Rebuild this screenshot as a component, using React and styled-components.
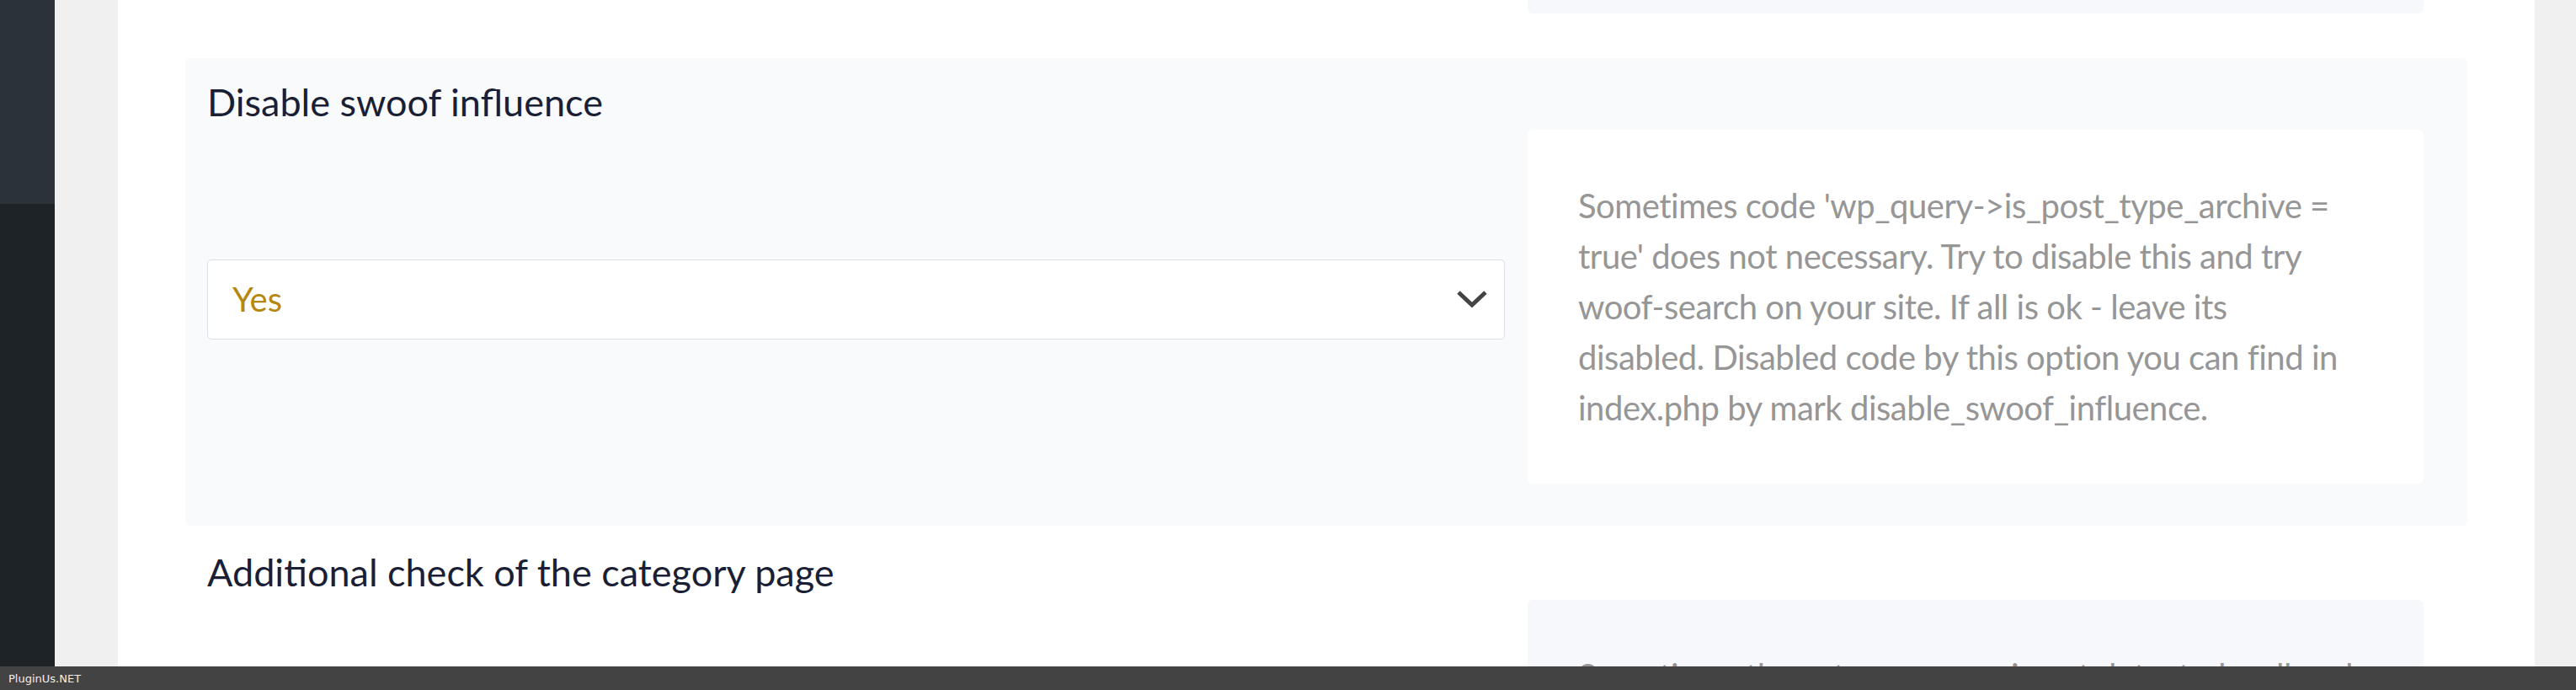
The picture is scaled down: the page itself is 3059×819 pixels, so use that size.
import React from "react";
import styled, { createGlobalStyle } from "styled-components";

const GlobalStyle = createGlobalStyle`
  html, body {
    margin: 0;
    padding: 0;
    height: 100%;
    overflow: hidden;
    background: #f0f0f1;
  }
  body {
    font-family: Lato, "Noto Sans", sans-serif;
  }
  #root {
    height: 100%;
  }
  * {
    box-sizing: border-box;
  }
`;

const Shell = styled.div`
  display: flex;
  height: 100vh;
  overflow: hidden;
`;

const AdminMenu = styled.aside`
  width: 65px;
  flex: none;
  display: flex;
  flex-direction: column;
  background: #1d2327;
`;

const MenuCurrent = styled.div`
  height: 242px;
  background: #2c3338;
`;

const Content = styled.main`
  flex: 1;
  min-width: 0;
  display: flex;
  padding: 0 49px 0 75px;
  background: #f0f0f1;
`;

const Panel = styled.div`
  flex: 1;
  min-width: 0;
  background: #ffffff;
  padding: 0 80px;
  overflow: hidden;
`;

const Section = styled.section`
  background: ${(p) => (p.$highlight ? "#f9fafc" : "transparent")};
  border-radius: 6px;
  padding: ${(p) => (p.$tail ? "0" : "22px")} 52px 50px 26px;
  & + & {
    margin-top: 3px;
  }
`;

const Heading = styled.h3`
  margin: 0 0 3px;
  font-size: 45px;
  line-height: 60px;
  font-weight: 400;
  color: #1b1f35;
  white-space: nowrap;
`;

const Body = styled.div`
  display: grid;
  grid-template-columns: 1fr 1064px;
  column-gap: 27px;
  align-items: center;
`;

const FakeSelect = styled.div`
  height: 95px;
  margin-bottom: 18px;
  border: 1px solid #dcdfe6;
  border-radius: 5px;
  background: #ffffff;
  display: flex;
  align-items: center;
  justify-content: space-between;
  padding: 0 20px 0 29px;
  font-size: 40px;
  color: #b5870f;
`;

const Chevron = styled.svg`
  width: 36px;
  height: 20px;
  flex: none;
`;

const Card = styled.div`
  background: ${(p) => (p.$onLight ? "#ffffff" : "#f6f8fc")};
  border-radius: ${(p) => (p.$tail ? "0 0 6px 6px" : "6px")};
  height: ${(p) => (p.$tail ? "16px" : "auto")};
  padding: ${(p) => (p.$tail ? "0" : "60px")};
  font-size: 40px;
  line-height: 60px;
  letter-spacing: -0.48px;
  color: #969696;
  white-space: nowrap;
`;

const FooterBar = styled.footer`
  position: fixed;
  left: 0;
  right: 0;
  bottom: 0;
  height: 28px;
  background: #434343;
  color: #eeeeee;
  font-family: "DejaVu Sans", sans-serif;
  font-size: 13px;
  display: flex;
  align-items: center;
  padding-left: 10px;
`;

function ChevronDown() {
  return (
    <Chevron viewBox="0 0 36 20" fill="none">
      <polyline
        points="2,2 18,17 34,2"
        stroke="#444444"
        strokeWidth="5"
        strokeLinecap="butt"
        strokeLinejoin="miter"
      />
    </Chevron>
  );
}

export default function App() {
  return (
    <>
      <GlobalStyle />
      <Shell>
        <AdminMenu>
          <MenuCurrent />
        </AdminMenu>
        <Content>
          <Panel>
            <Section $tail>
              <Body>
                <div />
                <Card $tail />
              </Body>
            </Section>

            <Section $highlight>
              <Heading>Disable swoof influence</Heading>
              <Body>
                <FakeSelect>
                  <span>Yes</span>
                  <ChevronDown />
                </FakeSelect>
                <Card $onLight>
                  Sometimes code 'wp_query-&gt;is_post_type_archive =
                  <br />
                  true' does not necessary. Try to disable this and try
                  <br />
                  woof-search on your site. If all is ok - leave its
                  <br />
                  disabled. Disabled code by this option you can find in
                  <br />
                  index.php by mark disable_swoof_influence.
                </Card>
              </Body>
            </Section>

            <Section>
              <Heading>Additional check of the category page</Heading>
              <Body>
                <FakeSelect>
                  <span>No</span>
                  <ChevronDown />
                </FakeSelect>
                <Card>
                  Sometimes the category page is not detected well and
                  <br />
                  the filter shows wrong terms. Enable this option to
                  <br />
                  make an additional check of the current category
                  <br />
                  page. If all is ok - leave it disabled, as it makes
                  <br />
                  one more request to the database.
                </Card>
              </Body>
            </Section>
          </Panel>
        </Content>
      </Shell>
      <FooterBar>PluginUs.NET</FooterBar>
    </>
  );
}
